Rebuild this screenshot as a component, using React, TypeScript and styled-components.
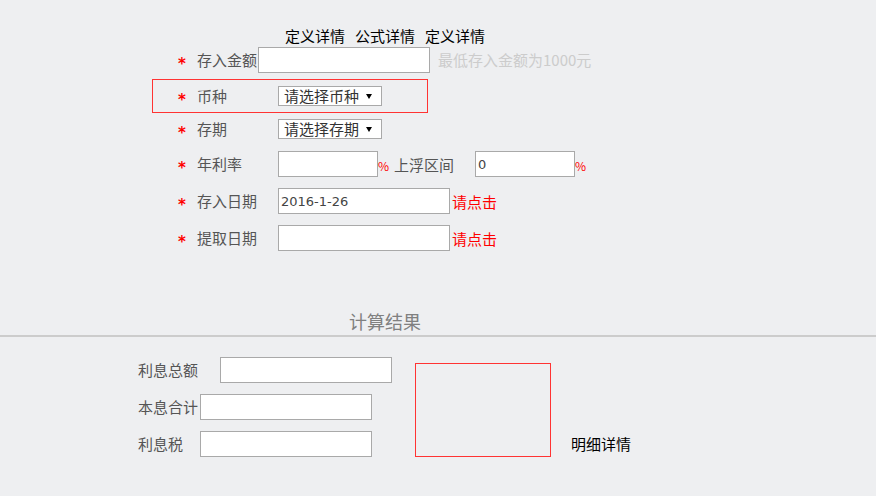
import styled, { createGlobalStyle } from "styled-components"

const GlobalStyle = createGlobalStyle`
  html, body {
    margin: 0;
    padding: 0;
    background: #eeeff1;
    font-family: "Noto Sans CJK SC", "Noto Sans", sans-serif;
    font-size: 15px;
  }
  * {
    box-sizing: border-box;
  }
`

const Page = styled.div`
  padding-top: 26px;
  min-height: 496px;
`

const Tabs = styled.div`
  display: flex;
  gap: 10px;
  padding-left: 285px;
  height: 21px;
  line-height: 20px;
  color: #000;
`

const Form = styled.div`
  padding-left: 152px;
`

const Row = styled.div<{ $top: number }>`
  display: flex;
  align-items: center;
  height: 26px;
  margin-top: ${(p) => p.$top}px;
  padding-left: 26px;
`

const Highlight = styled.div`
  display: flex;
  align-items: center;
  width: 276px;
  height: 34px;
  margin-top: 6px;
  padding-left: 25px;
  border: 1px solid #f33;
`

const Star = styled.span`
  width: 19px;
  flex: none;
  color: #f00;
  font-family: "DejaVu Sans", sans-serif;
  font-weight: bold;
  font-size: 15px;
  line-height: 1;
  padding-top: 9px;
`

const Label = styled.span<{ $w: number }>`
  width: ${(p) => p.$w}px;
  flex: none;
  color: #555;
  line-height: 20px;
`

const Input = styled.input<{ $w: number }>`
  width: ${(p) => p.$w}px;
  height: 26px;
  margin: 0;
  padding: 0 2px;
  border: 1px solid #a9a9a9;
  background: #fff;
  font-family: "DejaVu Sans", sans-serif;
  font-size: 13px;
  color: #444;
  outline: none;
`

const SelectWrap = styled.span`
  position: relative;
  display: inline-block;
  height: 20px;
  &::after {
    content: "";
    position: absolute;
    right: 10px;
    top: 8px;
    width: 0;
    height: 0;
    border-left: 3px solid transparent;
    border-right: 3px solid transparent;
    border-top: 5px solid #000;
    pointer-events: none;
  }
`

const Select = styled.select`
  appearance: none;
  display: block;
  width: 104px;
  height: 20px;
  margin: 0;
  padding: 0 0 0 5px;
  border: 1px solid #a9a9a9;
  border-radius: 0;
  background: #fff;
  font-family: "Noto Sans CJK SC", sans-serif;
  font-size: 15px;
  line-height: 18px;
  color: #333;
`

const Hint = styled.span`
  margin-left: 8px;
  color: #ccc;
  line-height: 20px;
`

const Percent = styled.span`
  color: #f00;
  font-size: 12px;
  width: 7px;
  padding-top: 2px;
`

const Inline = styled.span<{ $left: number; $w: number }>`
  margin-left: ${(p) => p.$left}px;
  width: ${(p) => p.$w}px;
  color: #555;
`

const Link = styled.span`
  margin-left: 2px;
  color: #f00;
  cursor: pointer;
`

const ResultTitle = styled.div`
  margin-top: 58px;
  padding-left: 349px;
  height: 24px;
  line-height: 24px;
  font-size: 18px;
  color: #808080;
`

const Divider = styled.div`
  margin-top: 2px;
  height: 2px;
  background: #ccc;
`

const Result = styled.div`
  display: flex;
  align-items: flex-start;
  margin-top: 20px;
  padding-left: 138px;
`

const ResultFields = styled.div`
  display: flex;
  flex-direction: column;
  gap: 11px;
  width: 254px;
`

const ResultRow = styled.div`
  display: flex;
  align-items: center;
  height: 26px;
`

const DetailBox = styled.div`
  width: 136px;
  height: 94px;
  margin: 6px 0 0 23px;
  border: 1px solid #f33;
`

const DetailLink = styled.span`
  align-self: flex-end;
  margin: 0 0 3px 20px;
  line-height: 20px;
  color: #000;
`

export default function App() {
  return (
    <Page>
      <GlobalStyle />
      <Tabs>
        <span>定义详情</span>
        <span>公式详情</span>
        <span>定义详情</span>
      </Tabs>

      <Form>
        <Row $top={0}>
          <Star>*</Star>
          <Label $w={61}>存入金额</Label>
          <Input $w={172} />
          <Hint>最低存入金额为1000元</Hint>
        </Row>

        <Highlight>
          <Star>*</Star>
          <Label $w={81}>币种</Label>
          <SelectWrap>
            <Select defaultValue="">
              <option value="">请选择币种</option>
            </Select>
          </SelectWrap>
        </Highlight>

        <Row $top={3}>
          <Star>*</Star>
          <Label $w={81}>存期</Label>
          <SelectWrap>
            <Select defaultValue="">
              <option value="">请选择存期</option>
            </Select>
          </SelectWrap>
        </Row>

        <Row $top={9}>
          <Star>*</Star>
          <Label $w={81}>年利率</Label>
          <Input $w={100} />
          <Percent>%</Percent>
          <Inline $left={9} $w={81}>上浮区间</Inline>
          <Input $w={100} defaultValue="0" />
          <Percent>%</Percent>
        </Row>

        <Row $top={11}>
          <Star>*</Star>
          <Label $w={81}>存入日期</Label>
          <Input $w={172} defaultValue="2016-1-26" />
          <Link>请点击</Link>
        </Row>

        <Row $top={11}>
          <Star>*</Star>
          <Label $w={81}>提取日期</Label>
          <Input $w={172} />
          <Link>请点击</Link>
        </Row>
      </Form>

      <ResultTitle>计算结果</ResultTitle>
      <Divider />

      <Result>
        <ResultFields>
          <ResultRow>
            <Label $w={82}>利息总额</Label>
            <Input $w={172} />
          </ResultRow>
          <ResultRow>
            <Label $w={62}>本息合计</Label>
            <Input $w={172} />
          </ResultRow>
          <ResultRow>
            <Label $w={62}>利息税</Label>
            <Input $w={172} />
          </ResultRow>
        </ResultFields>
        <DetailBox />
        <DetailLink>明细详情</DetailLink>
      </Result>
    </Page>
  )
}
